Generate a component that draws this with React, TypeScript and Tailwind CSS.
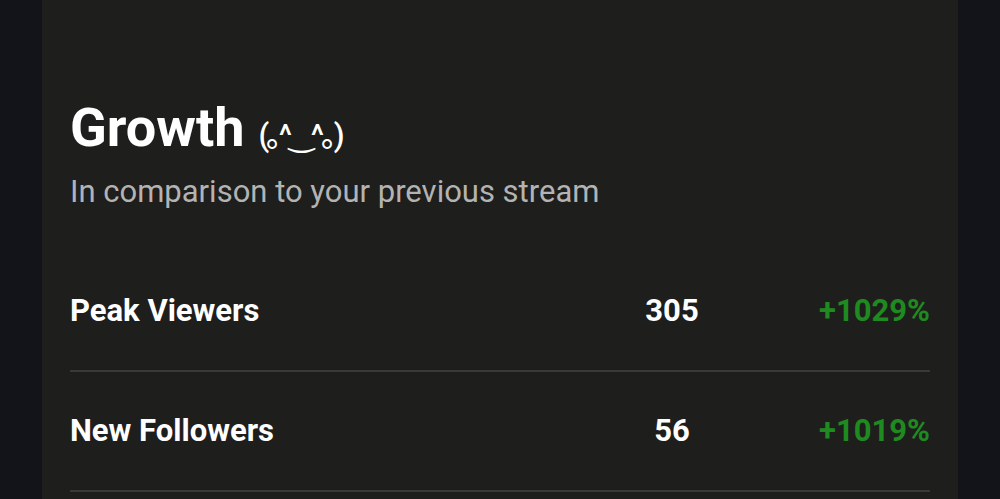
import React from "react";

const rows = [
  { label: "Peak Viewers", value: "305", change: "+1029%" },
  { label: "New Followers", value: "56", change: "+1019%" },
];

export default function App() {
  return (
    <div className="h-[499px] w-full overflow-hidden bg-[#131419]" style={{ fontFamily: "Roboto, 'Noto Sans', sans-serif" }}>
      <div className="mx-[42px] h-full bg-[#1e1e1d] px-[28px] pt-[96px]">
        <h1 className="flex items-baseline text-[54px] font-bold leading-[64px] text-white">
          Growth
          <span className="ml-[14px] text-[31px] font-medium tracking-[-3px]" style={{ fontFamily: "Roboto, 'Noto Sans CJK JP', 'DejaVu Sans', sans-serif" }}>(｡^‿^｡)</span>
        </h1>
        <p className="mt-[4px] text-[31px] leading-[40px] text-[#b3b3b3]">In comparison to your previous stream</p>
        <div className="mt-[40px]">
          {rows.map((r) => (
            <div key={r.label} className="flex h-[120px] items-center border-b-2 border-[#393939] text-[31px] font-bold">
              <div className="flex-1 text-white">{r.label}</div>
              <div className="w-[120px] text-center text-white">{r.value}</div>
              <div className="w-[198px] text-right text-[#1f8a1f]">{r.change}</div>
            </div>
          ))}
        </div>
      </div>
    </div>
  );
}
